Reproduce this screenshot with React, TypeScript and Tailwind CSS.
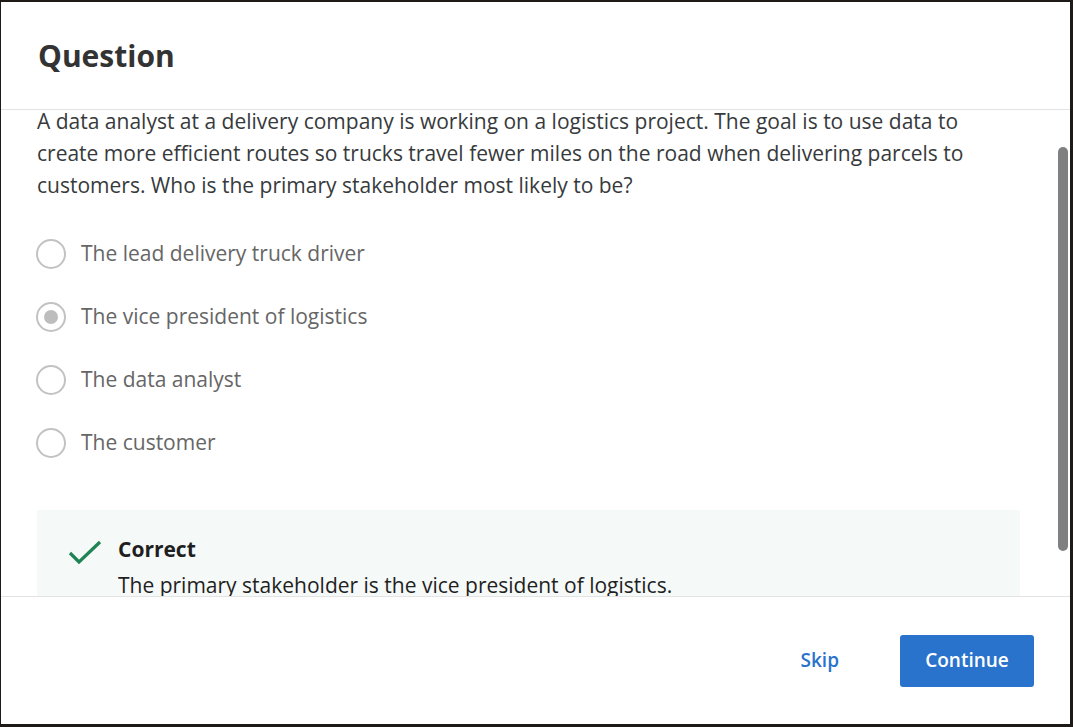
import React from 'react';

const options = [
    'The lead delivery truck driver',
    'The vice president of logistics',
    'The data analyst',
    'The customer',
];

const Radio = ({ checked }: { checked: boolean }) => (
    <span className="flex items-center justify-center w-[30px] h-[30px] rounded-full border-2 border-[#c2c2c2] bg-white shrink-0">
        {checked && <span className="w-[14px] h-[14px] rounded-full bg-[#bdbdbd]" />}
    </span>
);

export default function App() {
    return (
        <div
            className="w-[1073px] h-[727px] bg-[#1e1a18] pt-[2px] pl-[1px] pr-[3px] pb-[3px]"
            style={{ fontFamily: '"Open Sans", "Noto Sans", sans-serif' }}
        >
            <div className="bg-white w-full h-full flex flex-col">
                <div className="h-[108px] shrink-0 flex items-center pl-[37px] border-b border-[#e3e3e3]">
                    <h1 className="text-[30px] font-bold text-[#333333] leading-none">Question</h1>
                </div>

                <div className="relative flex-1 overflow-hidden">
                    <div className="-mt-[5px] pl-[36px] pr-[50px]">
                        <p className="text-[21px] leading-[32px] text-[#373a3c]">
                            A data analyst at a delivery company is working on a logistics project. The goal is to use data to create more efficient routes so trucks travel fewer miles on the road when delivering parcels to customers. Who is the primary stakeholder most likely to be?
                        </p>

                        <div className="mt-[21px] -ml-[1px]">
                            {options.map((o, i) => (
                                <div key={o} className="h-[63px] flex items-center gap-[15px]">
                                    <Radio checked={i === 1} />
                                    <span className="text-[21px] text-[#666666]">{o}</span>
                                </div>
                            ))}
                        </div>

                        <div className="mt-[36px] bg-[#f5f9f8] pt-[25px] pl-[31px] pb-[30px] flex gap-[16px]">
                            <svg width="34" height="26" viewBox="0 0 34 26" className="mt-[4px] shrink-0">
                                <path d="M2 14 L11 23 L32 3" fill="none" stroke="#1f8354" strokeWidth="3.2" />
                            </svg>
                            <div className="text-[21px] text-[#1f1f1f]">
                                <div className="font-bold leading-[28px]">Correct</div>
                                <div className="mt-[8px] leading-[28px]">The primary stakeholder is the vice president of logistics.</div>
                            </div>
                        </div>
                    </div>

                    <div className="absolute right-[2px] top-[37px] w-[10px] h-[404px] rounded-full bg-[#808080]" />
                </div>

                <div className="h-[128px] shrink-0 border-t border-[#e3e3e3] flex items-center justify-end pr-[36px] gap-[53px]">
                    <button className="px-[8px] py-[6px] text-[19px] font-semibold text-[#2a73cc]">Skip</button>
                    <button className="w-[134px] h-[52px] rounded-[3px] bg-[#2a73cc] text-white text-[19px] font-semibold">Continue</button>
                </div>
            </div>
        </div>
    );
}
